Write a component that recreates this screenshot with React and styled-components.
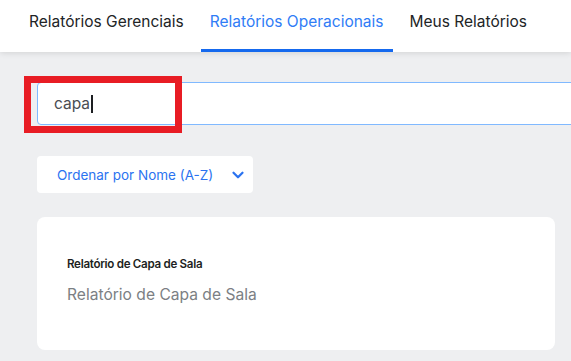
import * as React from 'react'
import styled, { createGlobalStyle } from 'styled-components'
import { ChevronDown } from 'lucide-react'

const GlobalStyle = createGlobalStyle`
  html, body {
    margin: 0;
    padding: 0;
    background: #eeeff1;
    font-family: Inter, "Noto Sans", Roboto, sans-serif;
    overflow: hidden;
  }
`

const Page = styled.div`
  width: 571px;
  height: 361px;
  overflow: hidden;
  background: #eeeff1;
`

const Header = styled.nav`
  display: flex;
  align-items: stretch;
  height: 52px;
  padding-left: 20px;
  background: #ffffff;
  box-shadow: 0 1px 6px rgba(0, 0, 0, 0.12);
  position: relative;
  z-index: 1;
`

const Tab = styled.div`
  display: flex;
  align-items: center;
  padding: 0 9px 6px;
  margin-right: 8px;
  font-size: 15.5px;
  white-space: nowrap;
  color: ${props => (props.active ? '#2f7cf6' : '#222426')};
  border-bottom: 3px solid ${props => (props.active ? '#1569ee' : 'transparent')};
`

const Main = styled.main`
  display: flex;
  flex-direction: column;
  align-items: flex-start;
  padding: 30px 0 0 37px;
`

const SearchWrap = styled.div`
  position: relative;
`

const SearchBox = styled.div`
  display: flex;
  align-items: center;
  box-sizing: border-box;
  width: 640px;
  height: 43px;
  padding-left: 16px;
  background: #ffffff;
  border: 1px solid #80b9ff;
  border-radius: 4px;
  font-size: 15.5px;
  color: #4a4d52;
`

const Caret = styled.span`
  display: inline-block;
  width: 1.5px;
  height: 18px;
  margin-left: 1px;
  background: #1d1f22;
`

const Highlight = styled.div`
  position: absolute;
  left: -13px;
  top: -6px;
  width: 158px;
  height: 57px;
  box-sizing: border-box;
  border: 7.5px solid #e81c24;
  pointer-events: none;
`

const SortSelect = styled.div`
  display: flex;
  align-items: center;
  justify-content: space-between;
  box-sizing: border-box;
  width: 216px;
  height: 37px;
  margin-top: 31px;
  padding: 0 6px 0 20px;
  background: #ffffff;
  border-radius: 4px;
  font-size: 13.5px;
  color: #2b73f0;
`

const Card = styled.div`
  box-sizing: border-box;
  width: 518px;
  height: 133px;
  margin-top: 24px;
  padding: 40px 30px 0;
  background: #ffffff;
  border-radius: 8px;
`

const CardTitle = styled.div`
  font-size: 11.6px;
  font-weight: 600;
  letter-spacing: -0.3px;
  color: #1d1f22;
`

const CardText = styled.div`
  margin-top: 14px;
  font-size: 15.6px;
  color: #7c7f84;
`

export default function App () {
  return (
    <Page>
      <GlobalStyle />
      <Header>
        <Tab>Relatórios Gerenciais</Tab>
        <Tab active>Relatórios Operacionais</Tab>
        <Tab>Meus Relatórios</Tab>
      </Header>
      <Main>
        <SearchWrap>
          <SearchBox>
            capa<Caret />
          </SearchBox>
          <Highlight />
        </SearchWrap>
        <SortSelect>
          Ordenar por Nome (A-Z)
          <ChevronDown size={18} strokeWidth={3} />
        </SortSelect>
        <Card>
          <CardTitle>Relatório de Capa de Sala</CardTitle>
          <CardText>Relatório de Capa de Sala</CardText>
        </Card>
      </Main>
    </Page>
  )
}
